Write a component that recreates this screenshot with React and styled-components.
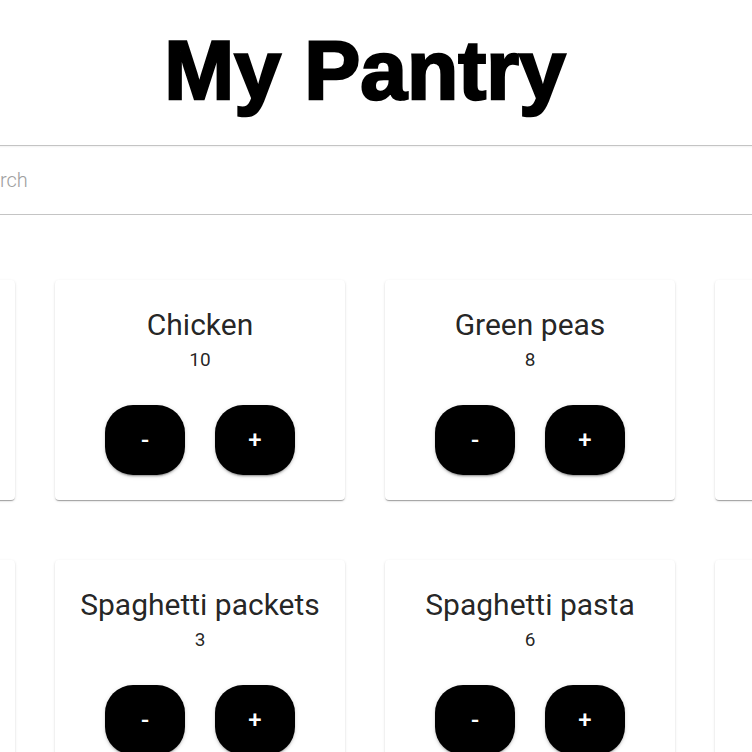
import styled, { createGlobalStyle } from "styled-components";

const GlobalStyle = createGlobalStyle`
  html, body {
    margin: 0;
    padding: 0;
    background: #fff;
    overflow: hidden;
  }
  body {
    font-family: Roboto, "Liberation Sans", sans-serif;
  }
`;

const Page = styled.div`
  width: 1280px;
  margin-left: -275px;
  display: flex;
  flex-direction: column;
`;

const Title = styled.h1`
  margin: 22px 0 0;
  text-align: center;
  font-family: "Liberation Sans", Arial, sans-serif;
  font-weight: 700;
  font-size: 84px;
  line-height: 96px;
  -webkit-text-stroke: 2.5px #000;
  color: #000;
`;

const SearchField = styled.input`
  margin-top: 27px;
  height: 70px;
  box-sizing: border-box;
  border: none;
  border-top: 1px solid #c4c4c4;
  border-bottom: 1px solid #c4c4c4;
  box-shadow: inset 0 4px 2px -3px #f2f2f2;
  padding: 0 0 0 242px;
  font-family: Roboto, sans-serif;
  font-weight: 300;
  font-size: 20px;
  color: #333;
  outline: none;
  &::placeholder {
    color: #9e9e9e;
  }
`;

const Grid = styled.div`
  margin-top: 65px;
  display: grid;
  grid-template-columns: repeat(4, 290px);
  column-gap: 40px;
  row-gap: 60px;
`;

const Card = styled.div`
  height: 220px;
  box-sizing: border-box;
  background: #fff;
  border-radius: 4px;
  box-shadow: 0px 2px 1px -1px rgba(0, 0, 0, 0.2),
    0px 1px 1px 0px rgba(0, 0, 0, 0.14), 0px 1px 3px 0px rgba(0, 0, 0, 0.12);
  display: flex;
  flex-direction: column;
  align-items: center;
  padding-top: 27px;
`;

const Name = styled.div`
  font-size: 30px;
  line-height: 36px;
  color: rgba(0, 0, 0, 0.87);
`;

const Count = styled.div`
  margin-top: 5px;
  font-size: 19px;
  line-height: 24px;
  color: rgba(0, 0, 0, 0.87);
`;

const Actions = styled.div`
  margin-top: 33px;
  display: flex;
  gap: 30px;
`;

const RoundBtn = styled.button`
  width: 80px;
  height: 70px;
  border: none;
  border-radius: 28px;
  background: #000;
  color: #fff;
  font-family: Roboto, sans-serif;
  font-weight: 500;
  font-size: 24px;
  cursor: pointer;
  box-shadow: 0px 3px 1px -2px rgba(0, 0, 0, 0.2),
    0px 2px 2px 0px rgba(0, 0, 0, 0.14), 0px 1px 5px 0px rgba(0, 0, 0, 0.12);
`;

const items = [
  { name: "Rice", count: 4 },
  { name: "Chicken", count: 10 },
  { name: "Green peas", count: 8 },
  { name: "Milk", count: 2 },
  { name: "Eggs", count: 12 },
  { name: "Spaghetti packets", count: 3 },
  { name: "Spaghetti pasta", count: 6 },
  { name: "Flour", count: 1 },
];

export default function App() {
  return (
    <>
      <GlobalStyle />
      <Page>
        <Title>My Pantry</Title>
        <SearchField placeholder="Search" />
        <Grid>
          {items.map((item) => (
            <Card key={item.name}>
              <Name>{item.name}</Name>
              <Count>{item.count}</Count>
              <Actions>
                <RoundBtn>-</RoundBtn>
                <RoundBtn>+</RoundBtn>
              </Actions>
            </Card>
          ))}
        </Grid>
      </Page>
    </>
  );
}
